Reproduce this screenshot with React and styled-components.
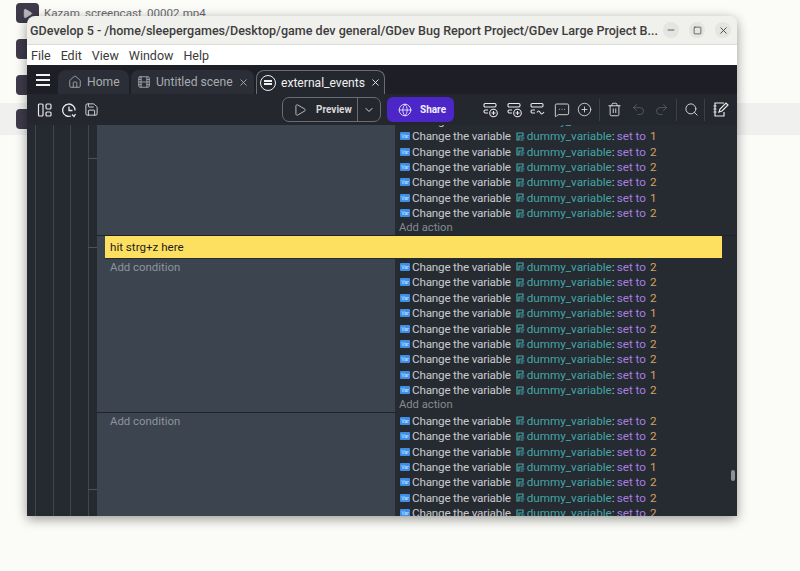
import React from "react";
import styled, { createGlobalStyle } from "styled-components";
import {
  X,
  ChevronDown,
  Play,
  Globe,
  Trash2,
  Undo2,
  Redo2,
  Search,
  Save,
  CirclePlus,
  MessageSquareMore,
  Home,
  Film,
  Minus,
  Square,
} from "lucide-react";

const GlobalStyle = createGlobalStyle`
  html, body {
    margin: 0;
    padding: 0;
    width: 800px;
    height: 571px;
    overflow: hidden;
    background: #fbfbf7;
    font-family: Roboto, "Noto Sans", "Liberation Sans", sans-serif;
  }
`;

const blocks = [
  { values: [2, 1, 2, 2, 2, 1, 2], clipped: true },
  { values: [2, 2, 2, 1, 2, 2, 2, 1, 2] },
  { values: [2, 2, 2, 1, 2, 2, 2] },
];

const Desktop = styled.div`
  position: relative;
  width: 800px;
  height: 571px;
  overflow: hidden;
`;

const FileList = styled.div`
  display: flex;
  flex-direction: column;
  margin-top: -5px;
`;

const FileRow = styled.div`
  display: flex;
  align-items: center;
  gap: 5px;
  height: ${(p) => (p.$selected ? "32px" : "36px")};
  padding-left: 16px;
  background: ${(p) => (p.$selected ? "#f0f0ee" : "transparent")};
  font-size: 11.6px;
  color: #6a6a6e;
`;

const FileIcon = styled.div`
  width: 23px;
  height: 20px;
  border-radius: 4px;
  background: #3e3a4a;
  display: flex;
  align-items: center;
  justify-content: center;
`;

const Window = styled.div`
  position: absolute;
  left: 27px;
  top: 16px;
  width: 710px;
  height: 500px;
  display: flex;
  flex-direction: column;
  border-radius: 8px 8px 0 0;
  overflow: hidden;
  box-shadow: 0 3px 12px rgba(0, 0, 0, 0.4);
`;

const TitleBar = styled.div`
  height: 29px;
  flex: none;
  display: flex;
  align-items: center;
  padding: 0 6px 0 3px;
  background: #f0f0ec;
  border-bottom: 1px solid #dcdcd8;
  box-sizing: border-box;
`;

const Title = styled.div`
  flex: 1;
  min-width: 0;
  font-size: 12.55px;
  font-weight: 500;
  color: #3d3d3d;
  white-space: nowrap;
  overflow: hidden;
`;

const WindowButtons = styled.div`
  flex: none;
  display: flex;
  gap: 10px;
`;

const WindowButton = styled.div`
  width: 16px;
  height: 16px;
  border-radius: 50%;
  background: #e4e4e0;
  display: flex;
  align-items: center;
  justify-content: center;
  color: #444;
`;

const MenuBar = styled.div`
  height: 20px;
  flex: none;
  display: flex;
  align-items: center;
  gap: 10px;
  padding-left: 4px;
  background: #fff;
  font-size: 12.5px;
  color: #3a3a3a;
`;

const TabBar = styled.div`
  height: 29px;
  flex: none;
  display: flex;
  align-items: flex-end;
  background: #1d1e26;
`;

const MenuIcon = styled.div`
  width: 31px;
  height: 29px;
  display: flex;
  flex-direction: column;
  justify-content: center;
  align-items: center;
  gap: 3px;

  span {
    display: block;
    width: 14px;
    height: 2px;
    background: #f2f2f2;
  }
`;

const Tab = styled.div`
  width: ${(p) => p.$width}px;
  height: 24px;
  display: flex;
  align-items: center;
  gap: 5px;
  margin-right: 2px;
  padding-left: ${(p) => p.$pad}px;
  box-sizing: border-box;
  border-radius: 8px 8px 0 0;
  background: ${(p) => (p.$active ? "#25272e" : "#2b2e36")};
  border: ${(p) => (p.$active ? "1px solid #6a6c72" : "none")};
  border-bottom: none;
  font-size: 12.1px;
  color: ${(p) => (p.$active ? "#f0f0f0" : "#a9abb0")};
  white-space: nowrap;
`;

const SceneIcon = styled.div`
  width: 16px;
  height: 16px;
  border: 1.5px solid #f0f0f0;
  border-radius: 50%;
  box-sizing: border-box;
  display: flex;
  flex-direction: column;
  align-items: center;
  justify-content: center;
  gap: 1.5px;

  span {
    display: block;
    width: 8px;
    height: 1.5px;
    background: #f0f0f0;
  }
`;

const Toolbar = styled.div`
  height: 31px;
  flex: none;
  display: flex;
  align-items: center;
  background: #25272e;
  color: #e8e8e8;
`;

const ToolGroup = styled.div`
  flex: none;
  display: flex;
  align-items: center;
  gap: ${(p) => p.$gap || 8}px;
  margin-left: ${(p) => p.$left || 0}px;
`;

const PreviewButton = styled.div`
  flex: none;
  display: flex;
  align-items: center;
  width: 99px;
  height: 25px;
  box-sizing: border-box;
  border: 1px solid #6a6c72;
  border-radius: 7px;
  margin-left: 183px;
  font-size: 10px;
  font-weight: 700;
  color: #d8d8da;
`;

const PreviewMain = styled.div`
  display: flex;
  align-items: center;
  gap: 9px;
  width: 75px;
  height: 100%;
  padding-left: 10px;
  box-sizing: border-box;
  border-right: 1px solid #6a6c72;
`;

const PreviewArrow = styled.div`
  flex: 1;
  display: flex;
  align-items: center;
  justify-content: center;
`;

const ShareButton = styled.div`
  flex: none;
  display: flex;
  align-items: center;
  gap: 8px;
  width: 67px;
  height: 25px;
  margin-left: 6px;
  padding-left: 11px;
  box-sizing: border-box;
  border-radius: 6px;
  background: #4c26c9;
  font-size: 10px;
  font-weight: 700;
  color: #f2f0fb;
`;

const Divider = styled.div`
  flex: none;
  width: 1px;
  height: 22px;
  margin-left: ${(p) => p.$left}px;
  background: #3d4048;
`;

const Sheet = styled.div`
  flex: 1;
  min-height: 0;
  display: flex;
  overflow: hidden;
  background: #262a31;
`;

const Gutter = styled.div`
  width: 70px;
  flex: none;
  display: flex;
  padding-left: 8px;
  gap: 16.5px;
  box-sizing: border-box;
  background: #252a30;
`;

const GutterLine = styled.div`
  position: relative;
  width: 1px;
  background: #41464e;
`;

const Tick = styled.div`
  position: absolute;
  left: 0;
  top: ${(p) => p.$top}px;
  width: 9px;
  height: 1px;
  background: #4e535a;
`;

const Events = styled.div`
  flex: 1;
  min-width: 0;
  margin-top: -12px;
`;

const Block = styled.div`
  display: grid;
  grid-template-columns: 298px 1fr;
`;

const Conditions = styled.div`
  background: #3c4450;
  padding: 1px 0 0 13px;
  border-top: ${(p) => (p.$ruled ? "1px solid #1f232a" : "none")};
  font-size: 11.4px;
  line-height: 15.4px;
  color: #8f949b;
`;

const Actions = styled.div`
  padding: ${(p) => (p.$ruled ? "1px" : "0")} 0 0 5px;
  display: flex;
  flex-direction: column;
`;

const ActionRow = styled.div`
  display: flex;
  align-items: center;
  height: 15.45px;
  font-size: 11.7px;
  white-space: nowrap;
  color: #c9cbce;
`;

const ActionLabel = styled.span`
  letter-spacing: -0.2px;
`;

const VarBadge = styled.div`
  width: 10px;
  height: 8px;
  margin-right: 2px;
  border-radius: 1px;
  background: #3f8fe8;
  color: #dcecff;
  font-size: 5px;
  line-height: 8px;
  text-align: center;
`;

const VarName = styled.span`
  display: inline-flex;
  align-items: center;
  gap: 2px;
  margin-left: 5px;
  color: #43a6a6;
`;

const Colon = styled.span`
  color: #c9cbce;
`;

const SetTo = styled.span`
  color: #a57fe0;
  margin-left: 2px;
`;

const Value = styled.span`
  color: #d4a55f;
  margin-left: 4px;
`;

const AddAction = styled.div`
  margin-left: -1px;
  font-size: 11.2px;
  line-height: 14px;
  color: #858a90;
`;

const CommentRow = styled.div`
  display: flex;
  background: linear-gradient(to right, #3c4450 8px, #262a31 8px);
  padding: 0 15px 1px 8px;
  border-top: 1px solid #1f232a;
`;

const Comment = styled.div`
  flex: 1;
  height: 22px;
  display: flex;
  align-items: center;
  padding-left: 5px;
  background: #fde060;
  color: #1e1e1e;
  font-size: 11.6px;
`;

const ScrollThumb = styled.div`
  position: absolute;
  right: 2px;
  top: 454px;
  width: 4px;
  height: 11px;
  border-radius: 2px;
  background: #8d9096;
`;

// conditions/actions toolbar glyph: two event rows with a small badge
const EventGlyph = ({ wave }) => (
  <svg width="16" height="16" viewBox="0 0 16 16" fill="none" stroke="#e8e8e8" strokeWidth="1.1">
    <rect x="1" y="1.5" width="12" height="3.5" rx="1.2" />
    <path d="M5 8H2.2Q1 8 1 9.5T2.2 11H5" />
    {wave ? (
      <path d="M7 10.5c1.2-2 2.2-2 3.2 0s2 2 3.8-0.5" />
    ) : (
      <>
        <circle cx="10.5" cy="11" r="3.8" />
        <path d="M10.5 9v4M8.5 11h4" />
      </>
    )}
  </svg>
);

const PanelsGlyph = () => (
  <svg width="16" height="16" viewBox="0 0 16 16" fill="none" stroke="#e8e8e8" strokeWidth="1.2">
    <rect x="1.5" y="2" width="4.5" height="12" rx="1" />
    <rect x="9" y="2" width="5" height="5" rx="1.2" />
    <rect x="9" y="10" width="5" height="4" rx="1" />
  </svg>
);

const HistoryGlyph = () => (
  <svg width="16" height="16" viewBox="0 0 16 16" fill="none" stroke="#e8e8e8" strokeWidth="1.3">
    <path d="M14 8.5A6.2 6.2 0 1 0 10 14" />
    <path d="M8 4.5V8.5H11.5" />
    <path d="M11 12.5l2 2 1.5-2.5" />
  </svg>
);

const NotesGlyph = () => (
  <svg width="17" height="17" viewBox="0 0 17 17" fill="none" stroke="#e8e8e8" strokeWidth="1.2">
    <path d="M12 2H3v13h9V11" />
    <path d="M1.5 5h3M1.5 8h3M1.5 11h3" />
    <path d="M7 11l1-3 6-6 2 2-6 6z" />
  </svg>
);

const VariableGlyph = () => (
  <svg width="9" height="9" viewBox="0 0 9 9" fill="none" stroke="#43a6a6" strokeWidth="1.2">
    <path d="M1 1h6v3H3v4H1zM4.5 6h4M4.5 8h3" />
  </svg>
);

const Action = ({ value }) => (
  <ActionRow>
    <VarBadge>Var</VarBadge>
    <ActionLabel>Change the variable</ActionLabel>
    <VarName>
      <VariableGlyph />
      dummy_variable
    </VarName>
    <Colon>:</Colon>
    <SetTo>set to</SetTo>
    <Value>{value}</Value>
  </ActionRow>
);

const EventBlock = ({ values, clipped, ruled }) => (
  <Block>
    <Conditions $ruled={ruled}>{!clipped && "Add condition"}</Conditions>
    <Actions $ruled={ruled}>
      {values.map((value, i) => (
        <Action key={i} value={value} />
      ))}
      <AddAction>Add action</AddAction>
    </Actions>
  </Block>
);

export default function App() {
  return (
    <Desktop>
      <GlobalStyle />
      <FileList>
        <FileRow>
          <FileIcon>
            <Play size={11} fill="#b9b6c0" color="#b9b6c0" />
          </FileIcon>
          Kazam_screencast_00002.mp4
        </FileRow>
        <FileRow>
          <FileIcon />
        </FileRow>
        <FileRow>
          <FileIcon />
        </FileRow>
        <FileRow $selected>
          <FileIcon />
        </FileRow>
      </FileList>

      <Window>
        <TitleBar>
          <Title>GDevelop 5 - /home/sleepergames/Desktop/game dev general/GDev Bug Report Project/GDev Large Project B...</Title>
          <WindowButtons>
            <WindowButton>
              <Minus size={10} />
            </WindowButton>
            <WindowButton>
              <Square size={9} />
            </WindowButton>
            <WindowButton>
              <X size={11} />
            </WindowButton>
          </WindowButtons>
        </TitleBar>
        <MenuBar>
          <span>File</span>
          <span>Edit</span>
          <span>View</span>
          <span>Window</span>
          <span>Help</span>
        </MenuBar>
        <TabBar>
          <MenuIcon>
            <span />
            <span />
            <span />
          </MenuIcon>
          <Tab $width={71} $pad={10}>
            <Home size={14} strokeWidth={1.5} />
            Home
          </Tab>
          <Tab $width={123} $pad={6}>
            <Film size={14} strokeWidth={1.5} />
            Untitled scene
            <X size={11} />
          </Tab>
          <Tab $active $width={129} $pad={3}>
            <SceneIcon>
              <span />
              <span />
            </SceneIcon>
            external_events
            <X size={11} />
          </Tab>
        </TabBar>
        <Toolbar>
          <ToolGroup $left={10} $gap={7.5}>
            <PanelsGlyph />
            <HistoryGlyph />
            <Save size={15} strokeWidth={1.4} />
          </ToolGroup>
          <PreviewButton>
            <PreviewMain>
              <Play size={14} strokeWidth={1.4} />
              Preview
            </PreviewMain>
            <PreviewArrow>
              <ChevronDown size={12} />
            </PreviewArrow>
          </PreviewButton>
          <ShareButton>
            <Globe size={14} strokeWidth={1.4} />
            Share
          </ShareButton>
          <ToolGroup $left={29} $gap={7.5}>
            <EventGlyph />
            <EventGlyph />
            <EventGlyph wave />
            <MessageSquareMore size={16} strokeWidth={1.3} />
            <CirclePlus size={15} strokeWidth={1.3} />
          </ToolGroup>
          <Divider $left={7} />
          <ToolGroup $left={7} $gap={8.5}>
            <Trash2 size={15} strokeWidth={1.4} />
            <Undo2 size={15} strokeWidth={1.3} color="#5c5f66" />
            <Redo2 size={15} strokeWidth={1.3} color="#5c5f66" />
          </ToolGroup>
          <Divider $left={7} />
          <ToolGroup $left={7}>
            <Search size={15} strokeWidth={1.4} />
          </ToolGroup>
          <Divider $left={5} />
          <ToolGroup $left={7}>
            <NotesGlyph />
          </ToolGroup>
        </Toolbar>
        <Sheet>
          <Gutter>
            <GutterLine />
            <GutterLine />
            <GutterLine />
            <GutterLine>
              <Tick $top={33} />
              <Tick $top={122} />
              <Tick $top={364} />
            </GutterLine>
          </Gutter>
          <Events>
            <EventBlock {...blocks[0]} />
            <CommentRow>
              <Comment>hit strg+z here</Comment>
            </CommentRow>
            <EventBlock {...blocks[1]} />
            <EventBlock {...blocks[2]} ruled />
          </Events>
        </Sheet>
        <ScrollThumb />
      </Window>
    </Desktop>
  );
}
